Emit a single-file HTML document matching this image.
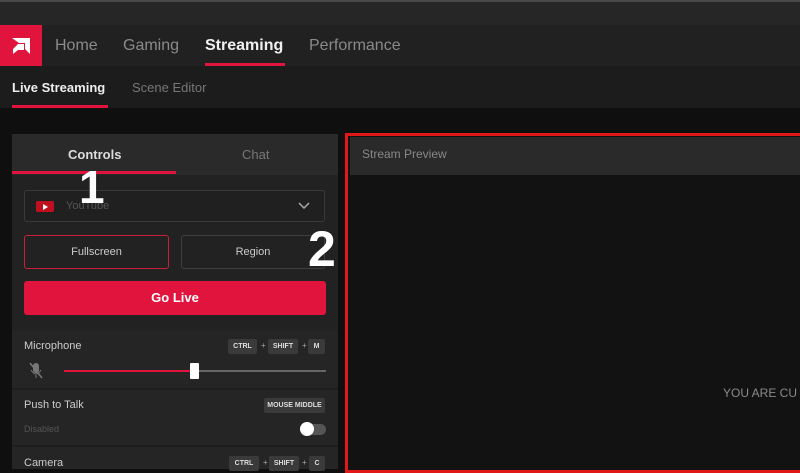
<!DOCTYPE html><html><head><style>
*{margin:0;padding:0;box-sizing:border-box}
body{width:800px;height:469px;overflow:hidden;background:#0f0f0f;font-family:"Liberation Sans",sans-serif;position:relative}
.a{position:absolute}
.t{color:#8a8a8a}
.kb{position:absolute;background:#3a3a3a;color:#ddd;font-size:7px;font-weight:bold;height:15px;line-height:15px;text-align:center;border-radius:2px}
.plus{position:absolute;color:#aaa;font-size:8px}
</style></head><body>
<div class="a" style="left:0;top:0;width:800px;height:25px;background:#262626;border-top:2px solid #4a4a4a"></div>
<div class="a" style="left:0;top:25px;width:800px;height:41px;background:#212121"></div>
<div class="a" style="left:0;top:25px;width:42px;height:41px;background:#e0143c"></div>
<svg class="a" style="left:11px;top:37px" width="20" height="18" viewBox="0 0 20 18"><path d="M1 1H19V17L14 12V6H8Z" fill="#fff"/><path d="M7 7H13V13H7L2 17V12Z" fill="#fff"/></svg>
<div class="a t" style="left:55px;top:37px;font-size:16px">Home</div>
<div class="a t" style="left:123px;top:37px;font-size:16px">Gaming</div>
<div class="a" style="left:205px;top:37px;font-size:16px;color:#f0f0f0;font-weight:bold">Streaming</div>
<div class="a" style="left:205px;top:63px;width:80px;height:3px;background:#e0143c"></div>
<div class="a t" style="left:309px;top:37px;font-size:16px">Performance</div>
<div class="a" style="left:0;top:66px;width:800px;height:42px;background:#1c1c1c"></div>
<div class="a" style="left:12px;top:80px;font-size:13px;color:#eee;font-weight:bold">Live Streaming</div>
<div class="a" style="left:12px;top:105px;width:96px;height:3px;background:#e0143c"></div>
<div class="a" style="left:132px;top:80px;font-size:13px;color:#777">Scene Editor</div>
<div class="a" style="left:12px;top:134px;width:326px;height:335px;background:#222"></div>
<div class="a" style="left:12px;top:134px;width:326px;height:41px;background:#2a2a2a"></div>
<div class="a" style="left:68px;top:147px;font-size:13px;color:#ddd;font-weight:bold">Controls</div>
<div class="a" style="left:242px;top:147px;font-size:13px;color:#777">Chat</div>
<div class="a" style="left:12px;top:171px;width:164px;height:3px;background:#e0143c"></div>
<div class="a" style="left:24px;top:190px;width:301px;height:32px;border:1px solid #3a3a3a;border-radius:3px;background:#202020"></div>
<div class="a" style="left:36px;top:201px;width:18px;height:11px;background:#c01020;border-radius:2px"></div>
<div class="a" style="left:43px;top:204px;width:0;height:0;border-left:5px solid #fff;border-top:3px solid transparent;border-bottom:3px solid transparent"></div>
<div class="a" style="left:66px;top:200px;font-size:11px;color:#555">YouTube</div>
<svg class="a" style="left:298px;top:202px" width="12" height="8"><path d="M1 1L6 6L11 1" stroke="#aaa" stroke-width="1.5" fill="none"/></svg>
<div class="a" style="left:24px;top:235px;width:145px;height:34px;border:1px solid #c8213a;border-radius:3px;color:#ccc;font-size:11px;text-align:center;line-height:32px">Fullscreen</div>
<div class="a" style="left:181px;top:235px;width:144px;height:34px;border:1px solid #3e3e3e;border-radius:3px;color:#ccc;font-size:11px;text-align:center;line-height:32px">Region</div>
<div class="a" style="left:24px;top:281px;width:302px;height:34px;background:#e0143c;border-radius:3px;color:#fff;font-size:13px;font-weight:bold;text-align:center;line-height:34px">Go Live</div>
<div class="a" style="left:12px;top:330px;width:326px;height:139px;background:#252525"></div>
<div class="a" style="left:12px;top:388px;width:326px;height:2px;background:#1e1e1e"></div>
<div class="a" style="left:12px;top:445px;width:326px;height:2px;background:#1e1e1e"></div>
<div class="a" style="left:24px;top:340px;font-size:11px;color:#ccc">Microphone</div>
<div class="kb" style="left:228px;top:339px;width:29px">CTRL</div><div class="plus" style="left:261px;top:341px">+</div>
<div class="kb" style="left:268px;top:339px;width:30px">SHIFT</div><div class="plus" style="left:302px;top:341px">+</div>
<div class="kb" style="left:308px;top:339px;width:17px">M</div>
<svg class="a" style="left:29px;top:362px" width="14" height="17"><rect x="4" y="1" width="6" height="10" rx="3" fill="#777"/><path d="M2 8Q7 16 12 8M7 13V16" stroke="#777" fill="none"/><path d="M1 1L13 16" stroke="#777" stroke-width="1.5"/></svg>
<div class="a" style="left:64px;top:370px;width:131px;height:2px;background:#e0143c"></div>
<div class="a" style="left:195px;top:370px;width:131px;height:2px;background:#666"></div>
<div class="a" style="left:190px;top:363px;width:9px;height:16px;background:#fff;border-radius:1px"></div>
<div class="a" style="left:24px;top:399px;font-size:11px;color:#ccc">Push to Talk</div>
<div class="kb" style="left:264px;top:398px;width:61px">MOUSE MIDDLE</div>
<div class="a" style="left:24px;top:424px;font-size:9px;color:#555">Disabled</div>
<div class="a" style="left:301px;top:424px;width:25px;height:11px;background:#555;border-radius:6px"></div>
<div class="a" style="left:300px;top:422px;width:14px;height:14px;background:#fff;border-radius:50%"></div>
<div class="a" style="left:24px;top:457px;font-size:11px;color:#ccc">Camera</div>
<div class="kb" style="left:229px;top:456px;width:30px">CTRL</div><div class="plus" style="left:263px;top:458px">+</div>
<div class="kb" style="left:269px;top:456px;width:30px">SHIFT</div><div class="plus" style="left:302px;top:458px">+</div>
<div class="kb" style="left:309px;top:456px;width:16px">C</div>
<div class="a" style="left:79px;top:160px;font-size:46px;font-weight:bold;color:#fff">1</div>
<div class="a" style="left:308px;top:220px;font-size:50px;font-weight:bold;color:#fff">2</div>
<div class="a" style="left:345px;top:133px;width:460px;height:340px;border:3px solid #e01818;background:#121212"></div>
<div class="a" style="left:350px;top:137px;width:450px;height:38px;background:#2a2a2a"></div>
<div class="a" style="left:362px;top:147px;font-size:12px;color:#888">Stream Preview</div>
<div class="a" style="left:723px;top:386px;font-size:12px;color:#8a8a8a;white-space:nowrap">YOU ARE CU</div>
</body></html>
